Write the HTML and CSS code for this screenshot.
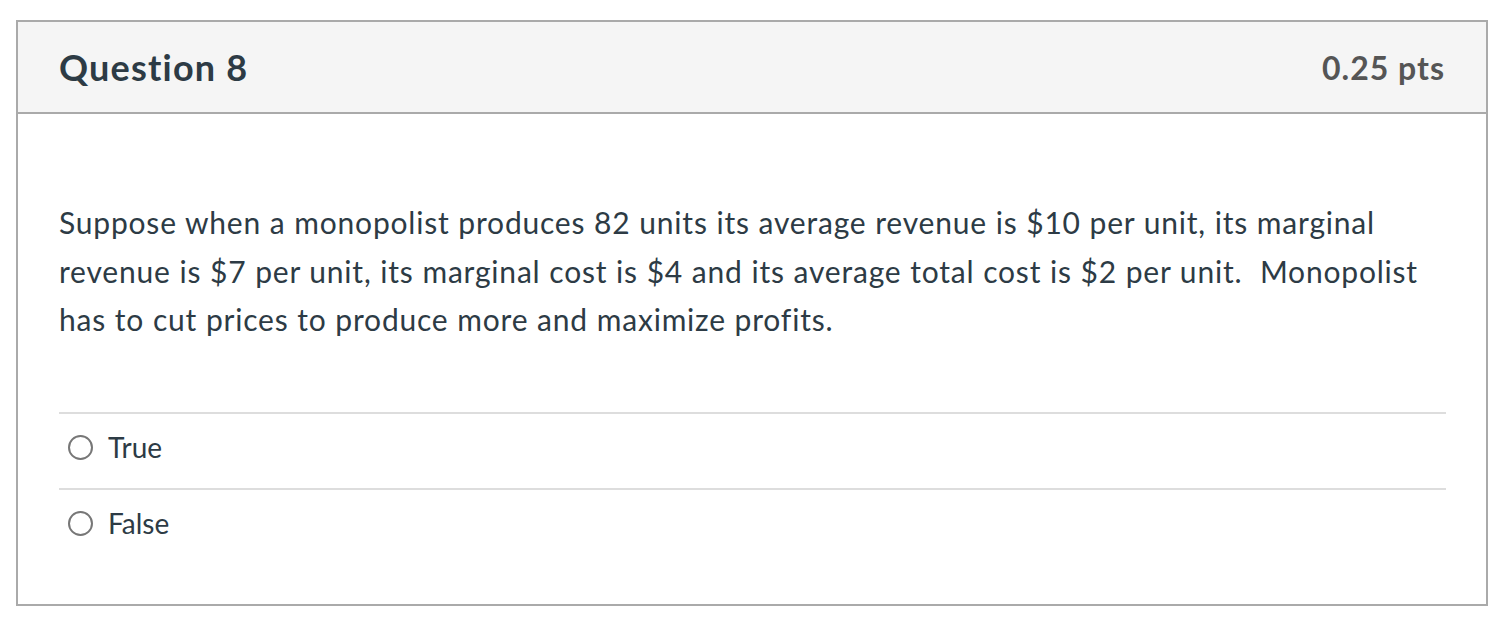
FILE: index.html
```html
<!DOCTYPE html>
<html>
<head>
<meta charset="utf-8">
<link rel="stylesheet" href="styles.css">
</head>
<body>
<div class="card">
  <div class="card-header">
    <h2 class="title">Question 8</h2>
    <span class="pts">0.25 pts</span>
  </div>
  <div class="card-body">
    <p class="question">Suppose when a monopolist produces 82 units its average revenue is $10 per unit, its marginal revenue is $7 per unit, its marginal cost is $4 and its average total cost is $2 per unit.&nbsp; Monopolist has to cut prices to produce more and maximize profits.</p>
    <div class="answers">
      <label class="answer"><span class="radio"></span><span class="answer-text">True</span></label>
      <label class="answer"><span class="radio"></span><span class="answer-text">False</span></label>
    </div>
  </div>
</div>
</body>
</html>
```
FILE: styles.css
```css
html, body {
  margin: 0;
  padding: 0;
  background: #ffffff;
}
body {
  font-family: Lato, "Liberation Sans", sans-serif;
  color: #2d3b45;
}
.card {
  margin: 20px 18px 0 16px;
  border: 2px solid #aaaaaa;
  box-sizing: border-box;
  height: 586px;
}
.card-header {
  display: flex;
  align-items: center;
  justify-content: space-between;
  height: 90px;
  padding: 0 41px;
  background: #f5f5f5;
  border-bottom: 2px solid #aaaaaa;
}
.title {
  margin: 0;
  font-size: 36px;
  letter-spacing: 1.2px;
  font-weight: 700;
  color: #2d3b45;
}
.pts {
  font-size: 32px;
  letter-spacing: 1px;
  font-weight: 700;
  color: #555555;
}
.card-body {
  padding: 84px 40px 0 41px;
}
.question {
  margin: 0;
  font-size: 30px;
  letter-spacing: 0.8px;
  word-spacing: 0.3px;
  line-height: 48.5px;
  color: #2d3b45;
}
.answers {
  margin-top: 68px;
}
.answer {
  display: flex;
  align-items: center;
  height: 76px;
  padding-bottom: 8px;
  box-sizing: border-box;
  border-top: 2px solid #dddddd;
  font-size: 28px;
}
.radio {
  width: 21px;
  height: 21px;
  margin-top: 2px;
  border: 2px solid #777777;
  border-radius: 50%;
  margin-left: 9px;
  margin-right: 15px;
}
.answer-text {
  color: #2d3b45;
}
```
